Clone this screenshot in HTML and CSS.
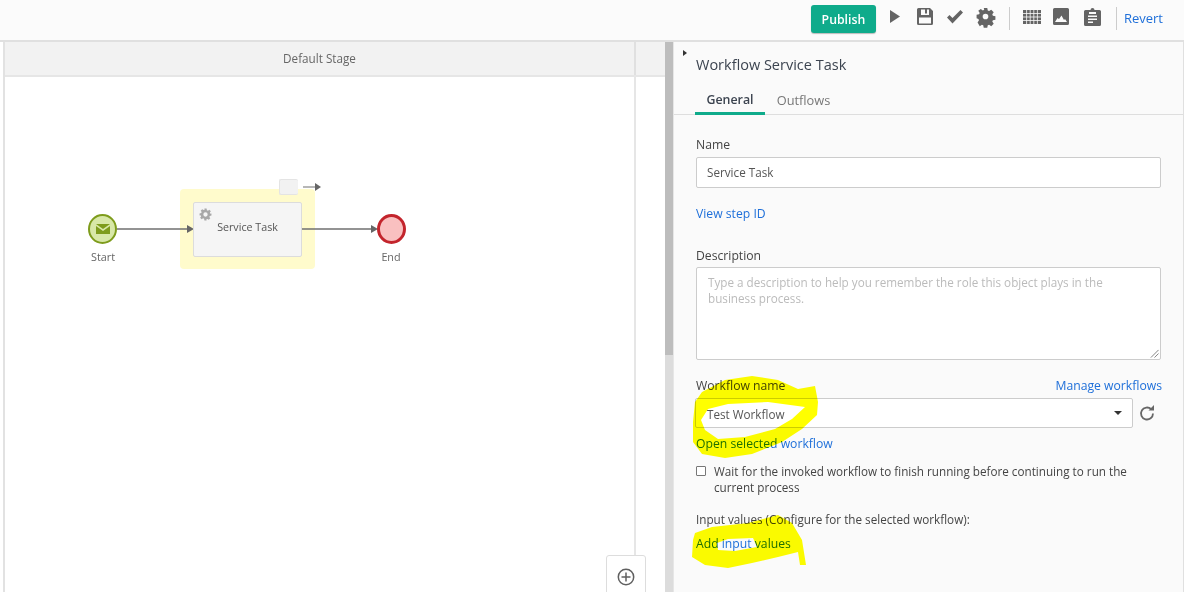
FILE: index.html
```html
<!DOCTYPE html>
<html lang="en">
<head>
<meta charset="utf-8">
<title>Workflow Service Task</title>
<link rel="stylesheet" href="styles.css">
</head>
<body>
<div class="app">
  <header class="toolbar">
    <button class="publish">Publish</button>
    <svg class="ico play" viewBox="0 0 10 13"><path d="M0 0l10 6.500L0 13z"/></svg>
    <svg class="ico save" viewBox="0 0 16 17"><path fill-rule="evenodd" d="M1.500 0H13l3 3v12.500a1.500 1.500 0 0 1-1.500 1.500h-13A1.500 1.500 0 0 1 0 15.500v-14A1.500 1.500 0 0 1 1.500 0zM4 1.500V7h8V1.500h-2V5.500H8V1.500zM2 9.500v6h12v-6z"/></svg>
    <svg class="ico check" viewBox="0 0 16 14"><path d="M0 7.500l2.500-2.500 3 3L13.500 0 16 2.500 5.500 13.500z"/></svg>
    <svg class="ico gear" viewBox="0 0 24 24"><path fill-rule="evenodd" d="M9.500 0h5l.7 3.600 1.900.8 3-2 3.500 3.500-2 3 .8 1.900 3.600.7v5l-3.600.7-.8 1.900 2 3-3.500 3.500-3-2-1.900.8-.7 3.600h-5l-.7-3.600-1.900-.8-3 2L.8 20.300l2-3-.8-1.900L-.600 14.500v-5l3.600-.7.8-1.900-2-3L5.300 1.400l3 2 1.900-.8zM12 8a4 4 0 1 0 0 8 4 4 0 0 0 0-8z"/></svg>
    <span class="sep"></span>
    <svg class="ico grid" viewBox="0 0 18 14"><path d="M0 0h18v14H0z"/><path class="grid-lines" d="M3.600 0v14M7.200 0v14M10.800 0v14M14.400 0v14M0 3.500h18M0 7h18M0 10.500h18"/></svg>
    <svg class="ico image" viewBox="0 0 16 17"><path fill-rule="evenodd" d="M1.500 0h13A1.500 1.500 0 0 1 16 1.500v14a1.500 1.500 0 0 1-1.500 1.500h-13A1.500 1.500 0 0 1 0 15.500v-14A1.500 1.500 0 0 1 1.500 0zM2 14h12l-2-3-1 1-2.500-4.500L6 11l-1.500-1z"/></svg>
    <svg class="ico clip" viewBox="0 0 17 18"><path fill-rule="evenodd" d="M6.500 2a2 2 0 0 1 4 0h5A1.500 1.500 0 0 1 17 3.500v13a1.500 1.500 0 0 1-1.500 1.500h-14A1.500 1.500 0 0 1 0 16.500v-13A1.500 1.500 0 0 1 1.500 2zM5 4v2h7V4zM4 7.500V9h9V7.500zM4 10.500V12h9v-1.500zM4 13.500V15h5v-1.500z"/></svg>
    <span class="sep"></span>
    <a class="link revert">Revert</a>
  </header>

  <main class="body">
    <section class="canvas">
      <div class="stage">
        <div class="stage-head">
          <div class="stage-title">Default Stage</div>
          <div class="stage-side"></div>
        </div>
        <div class="stage-lane">
          <div class="diagram">
            <div class="selection"></div>
            <div class="tag"></div>
            <svg class="flow" viewBox="0 0 340 110">
              <path class="flow-line" d="M44 59h72M228 59h72"/>
              <path class="flow-head" d="M114 55l7 4-7 4zM298 55l7 4-7 4z"/>
              <path class="flow-line thin" d="M230 17h13"/>
              <path class="flow-head" d="M242 13l6 4-6 4z"/>
            </svg>
            <div class="event start">
              <svg class="mail" viewBox="0 0 14 10"><path d="M0 0h14L7 5z"/><path d="M0 2l7 5 7-5v8H0z"/></svg>
            </div>
            <div class="event end"></div>
            <div class="event-label start-label">Start</div>
            <div class="event-label end-label">End</div>
            <div class="task">
              <svg class="task-gear" viewBox="0 0 24 24"><path fill-rule="evenodd" d="M10 1h4l.6 3.100 1.900.8 2.600-1.800 2.800 2.800-1.800 2.600.8 1.900L23 10v4l-3.100.6-.8 1.900 1.800 2.600-2.800 2.800-2.600-1.800-1.900.8L14 23h-4l-.6-3.100-1.900-.8-2.600 1.800-2.800-2.800 1.800-2.600-.8-1.900L1 14v-4l3.100-.6.8-1.900-1.800-2.600 2.800-2.800 2.600 1.800 1.900-.8zM12 8a4 4 0 1 0 0 8 4 4 0 0 0 0-8z"/></svg>
              <span>Service Task</span>
            </div>
          </div>
        </div>
      </div>
      <div class="zoom-box">
        <svg class="zoom-ico" viewBox="0 0 18 18"><circle cx="9" cy="9" r="7.700"/><path d="M9 4.500v9M4.500 9h9"/></svg>
      </div>
    </section>

    <div class="scrollbar"><div class="thumb"></div></div>

    <aside class="panel">
      <span class="caret"></span>
      <h1 class="title">Workflow Service Task</h1>
      <nav class="tabs">
        <a class="tab active">General</a>
        <a class="tab">Outflows</a>
      </nav>
      <div class="form">
        <label class="label">Name</label>
        <div class="input">Service Task</div>
        <a class="link step-link">View step ID</a>
        <label class="label desc-label">Description</label>
        <div class="textarea">Type a description to help you remember the role this object plays in the business process.
          <svg class="grip" viewBox="0 0 10 10"><path d="M9.500 1L1 9.500M9.500 5L5 9.500"/></svg>
        </div>
        <div class="label-row">
          <label class="label flush">Workflow name</label>
          <a class="link">Manage workflows</a>
        </div>
        <div class="select-row">
          <div class="select">Test Workflow<span class="select-caret"></span></div>
          <svg class="refresh" viewBox="0 0 18 18"><path d="M15 9.500a6 6 0 1 1-1.800-4.300"/><path class="refresh-tip" d="M10.500 6.500H16V1z"/></svg>
        </div>
        <a class="link open-link">Open selected workflow</a>
        <div class="check-row">
          <span class="check"></span>
          <span>Wait for the invoked workflow to finish running before continuing to run the current process</span>
        </div>
        <p class="inputs-label">Input values (Configure for the selected workflow):</p>
        <a class="link add-link">Add input values</a>
      </div>
    </aside>
  </main>

  <svg class="highlight" viewBox="0 0 1184 592">
    <path fill-rule="evenodd" d="M695 402L702 392L725 380L752 376L778 380L798 389L815 386L818 402L817 415L802 429L782 442L752 454L725 458L702 454L693 442L693 422ZM701 420L708 409L728 404L768 402L805 407L792 419L775 429L745 437L718 439L705 430Z"/>
    <path fill-rule="evenodd" d="M695 533L712 527L748 523L778 515L792 523L802 540L806 565L800 565L798 552L778 557L752 563L728 568L705 565L692 557L693 540ZM717 543L728 539L753 538L757 547L735 551L718 550Z"/>
  </svg>
</div>
</body>
</html>
```

FILE: styles.css
```css
* { box-sizing: border-box; }
html, body { margin: 0; height: 100%; }
body {
  font-family: "Open Sans", "Noto Sans", sans-serif;
  font-size: 11.700px;
  line-height: 16px;
  color: #444;
  background: #fafafa;
  overflow: hidden;
}
.app { position: relative; width: 1184px; height: 592px; overflow: hidden; display: flex; flex-direction: column; }
.toolbar {
  height: 42px;
  flex: none;
  display: flex;
  align-items: center;
  justify-content: flex-end;
  padding: 0 21px 7px 0;
  border-bottom: 2px solid #e0e0e0;
  background: #fbfbfb;
}
.publish {
  width: 65px;
  height: 28px;
  margin-top: 5px;
  border: 0;
  border-radius: 3px;
  background: #0fab8b;
  color: #fff;
  font: 600 12.300px "Open Sans", sans-serif;
  padding: 0;
  box-shadow: 0 1px 1px #bbb;
}
.ico { display: block; fill: #646464; flex: none; }
.play { width: 10px; height: 13px; margin-left: 14px; }
.save { width: 16px; height: 17px; margin-left: 17px; }
.check { width: 16px; height: 14px; margin-left: 14px; }
.gear { width: 17px; height: 17px; margin-left: 14px; overflow: visible; }
.grid { width: 18px; height: 14px; }
.grid-lines { fill: none; stroke: #fbfbfb; stroke-width: .8; }
.image { width: 16px; height: 17px; margin-left: 12px; }
.clip { width: 17px; height: 18px; margin-left: 15px; }
.sep { width: 1px; height: 23px; background: #ccc; margin: 4px 13px 0 15px; }
.clip + .sep { margin-right: 7px; }
.link { color: #1e6fd9; font-size: 12.200px; font-weight: 500; line-height: 16px; }
.revert { padding-top: 3px; font-size: 13px; }
.body { flex: 1; display: flex; min-height: 0; }
.canvas { position: relative; width: 665px; padding-left: 3px; background: #fff; }
.stage { height: 100%; border-left: 2px solid #e2e2e2; }
.stage-head { height: 35px; display: flex; background: #f2f2f2; border-bottom: 2px solid #e6e6e6; }
.stage-title { flex: 1; text-align: center; padding-top: 8px; font-size: 11.700px; color: #666; border-right: 2px solid #e0e0e0; }
.stage-side { width: 29px; }
.stage-lane { position: relative; height: 515px; margin-right: 29px; border-right: 2px solid #e6e6e6; }
.diagram { position: absolute; left: 0; top: 0; width: 600px; height: 300px; }
.selection { position: absolute; left: 175px; top: 112px; width: 135px; height: 80px; background: #fffbcc; border-radius: 4px; }
.tag { position: absolute; left: 274px; top: 102px; width: 19px; height: 16px; background: #f2f2f2; border: 1px solid #e4e4e4; border-right: 0; border-radius: 2px; }
.flow { position: absolute; left: 68px; top: 93px; width: 340px; height: 110px; }
.flow-line { fill: none; stroke: #707070; stroke-width: 1.500; }
.flow-line.thin { stroke: #888; stroke-width: 1.200; }
.flow-head { fill: #666; }
.event { position: absolute; top: 137px; width: 30px; height: 30px; border-radius: 50%; display: flex; align-items: center; justify-content: center; }
.start { left: 83px; width: 29px; background: #d8e8a8; border: 2px solid #7e9c1c; }
.mail { width: 14px; height: 10px; fill: #7e9c1c; }
.end { left: 372px; width: 29px; background: #f9c0c0; border: 3px solid #c3242c; }
.event-label { position: absolute; top: 172px; width: 60px; text-align: center; font-size: 10.800px; color: #666; }
.start-label { left: 68px; }
.end-label { left: 356px; }
.task {
  position: absolute; left: 188px; top: 125px; width: 109px; height: 55px;
  background: #f5f5f5; border: 1px solid #dcdcdc; border-radius: 2px;
  text-align: center; padding-top: 16px; font-size: 10.700px; color: #555;
}
.task-gear { position: absolute; left: 5px; top: 5px; width: 13px; height: 13px; fill: #a8a8a8; }
.zoom-box { position: absolute; left: 606px; top: 513px; width: 40px; height: 60px; background: #fff; border: 1px solid #ddd; border-radius: 3px 3px 0 0; }
.zoom-ico { position: absolute; left: 10px; top: 12px; width: 18px; height: 18px; fill: none; stroke: #606060; stroke-width: 1.500; }
.scrollbar { width: 8px; flex: none; background: #dcdcdc; }
.thumb { width: 100%; height: 313px; background: #bdbdbd; }
.panel { position: relative; flex: 1; background: #fafafa; border-left: 1px solid #e6e6e6; border-right: 1px solid #e0e0e0; }
.caret { position: absolute; left: 9px; top: 8px; width: 0; height: 0; border-left: 4px solid #333; border-top: 3.500px solid transparent; border-bottom: 3.500px solid transparent; }
.title { margin: 0; padding: 13px 0 0 22px; font-size: 14.500px; line-height: 20px; font-weight: 500; color: #3c4450; }
.tabs { display: flex; margin-top: 16px; padding-left: 21px; height: 24px; border-bottom: 1px solid #dedede; }
.tab { width: 70px; text-align: center; font-size: 12.800px; font-weight: 500; line-height: 18px; color: #777; height: 24px; }
.tab + .tab { width: 77px; }
.tab.active { color: #3c4450; font-weight: 600; font-size: 12.400px; border-bottom: 3px solid #0fab8b; }
.form { padding: 22px 22px 0 22px; display: flex; flex-direction: column; align-items: stretch; }
.label { font-size: 12.200px; font-weight: 500; line-height: 16px; color: #444; margin-bottom: 4px; }
.label.flush { margin: 0; }
.input, .select, .textarea { background: #fff; border: 1px solid #ccc; border-radius: 2px; font-size: 11.700px; color: #555; }
.input { height: 31px; padding: 6px 10px; }
.step-link { margin-top: 18px; align-self: flex-start; }
.desc-label { margin-top: 26px; margin-bottom: 3px; }
.textarea { position: relative; height: 93px; padding: 6px 11px; color: #bbb; }
.grip { position: absolute; right: 1px; bottom: 1px; width: 9px; height: 9px; fill: none; stroke: #777; stroke-width: 1; }
.label-row { display: flex; justify-content: space-between; margin-top: 18px; margin-right: -1px; }
.select-row { display: flex; align-items: center; margin-top: 4px; margin-left: -1px; }
.select { position: relative; width: 438px; height: 30px; padding: 7px 11px; }
.select-caret { position: absolute; right: 10px; top: 12px; border-top: 4px solid #333; border-left: 4px solid transparent; border-right: 4px solid transparent; }
.refresh { width: 18px; height: 18px; margin-left: 5px; fill: none; stroke: #666; stroke-width: 1.800; }
.refresh-tip { fill: #666; stroke: none; }
.open-link { margin-top: 8px; align-self: flex-start; }
.check-row { display: flex; gap: 8px; margin-top: 11px; margin-right: 12px; color: #444; }
.check-row .check { flex: none; width: 10px; height: 10px; margin: 3px 0 0; background: #fff; border: 1px solid #777; border-radius: 1px; }
.inputs-label { margin: 16px 0 0; color: #444; }
.add-link { margin-top: 9px; align-self: flex-start; }
.highlight { position: absolute; left: 0; top: 0; width: 1184px; height: 592px; fill: #ffff00; mix-blend-mode: multiply; pointer-events: none; }
```
